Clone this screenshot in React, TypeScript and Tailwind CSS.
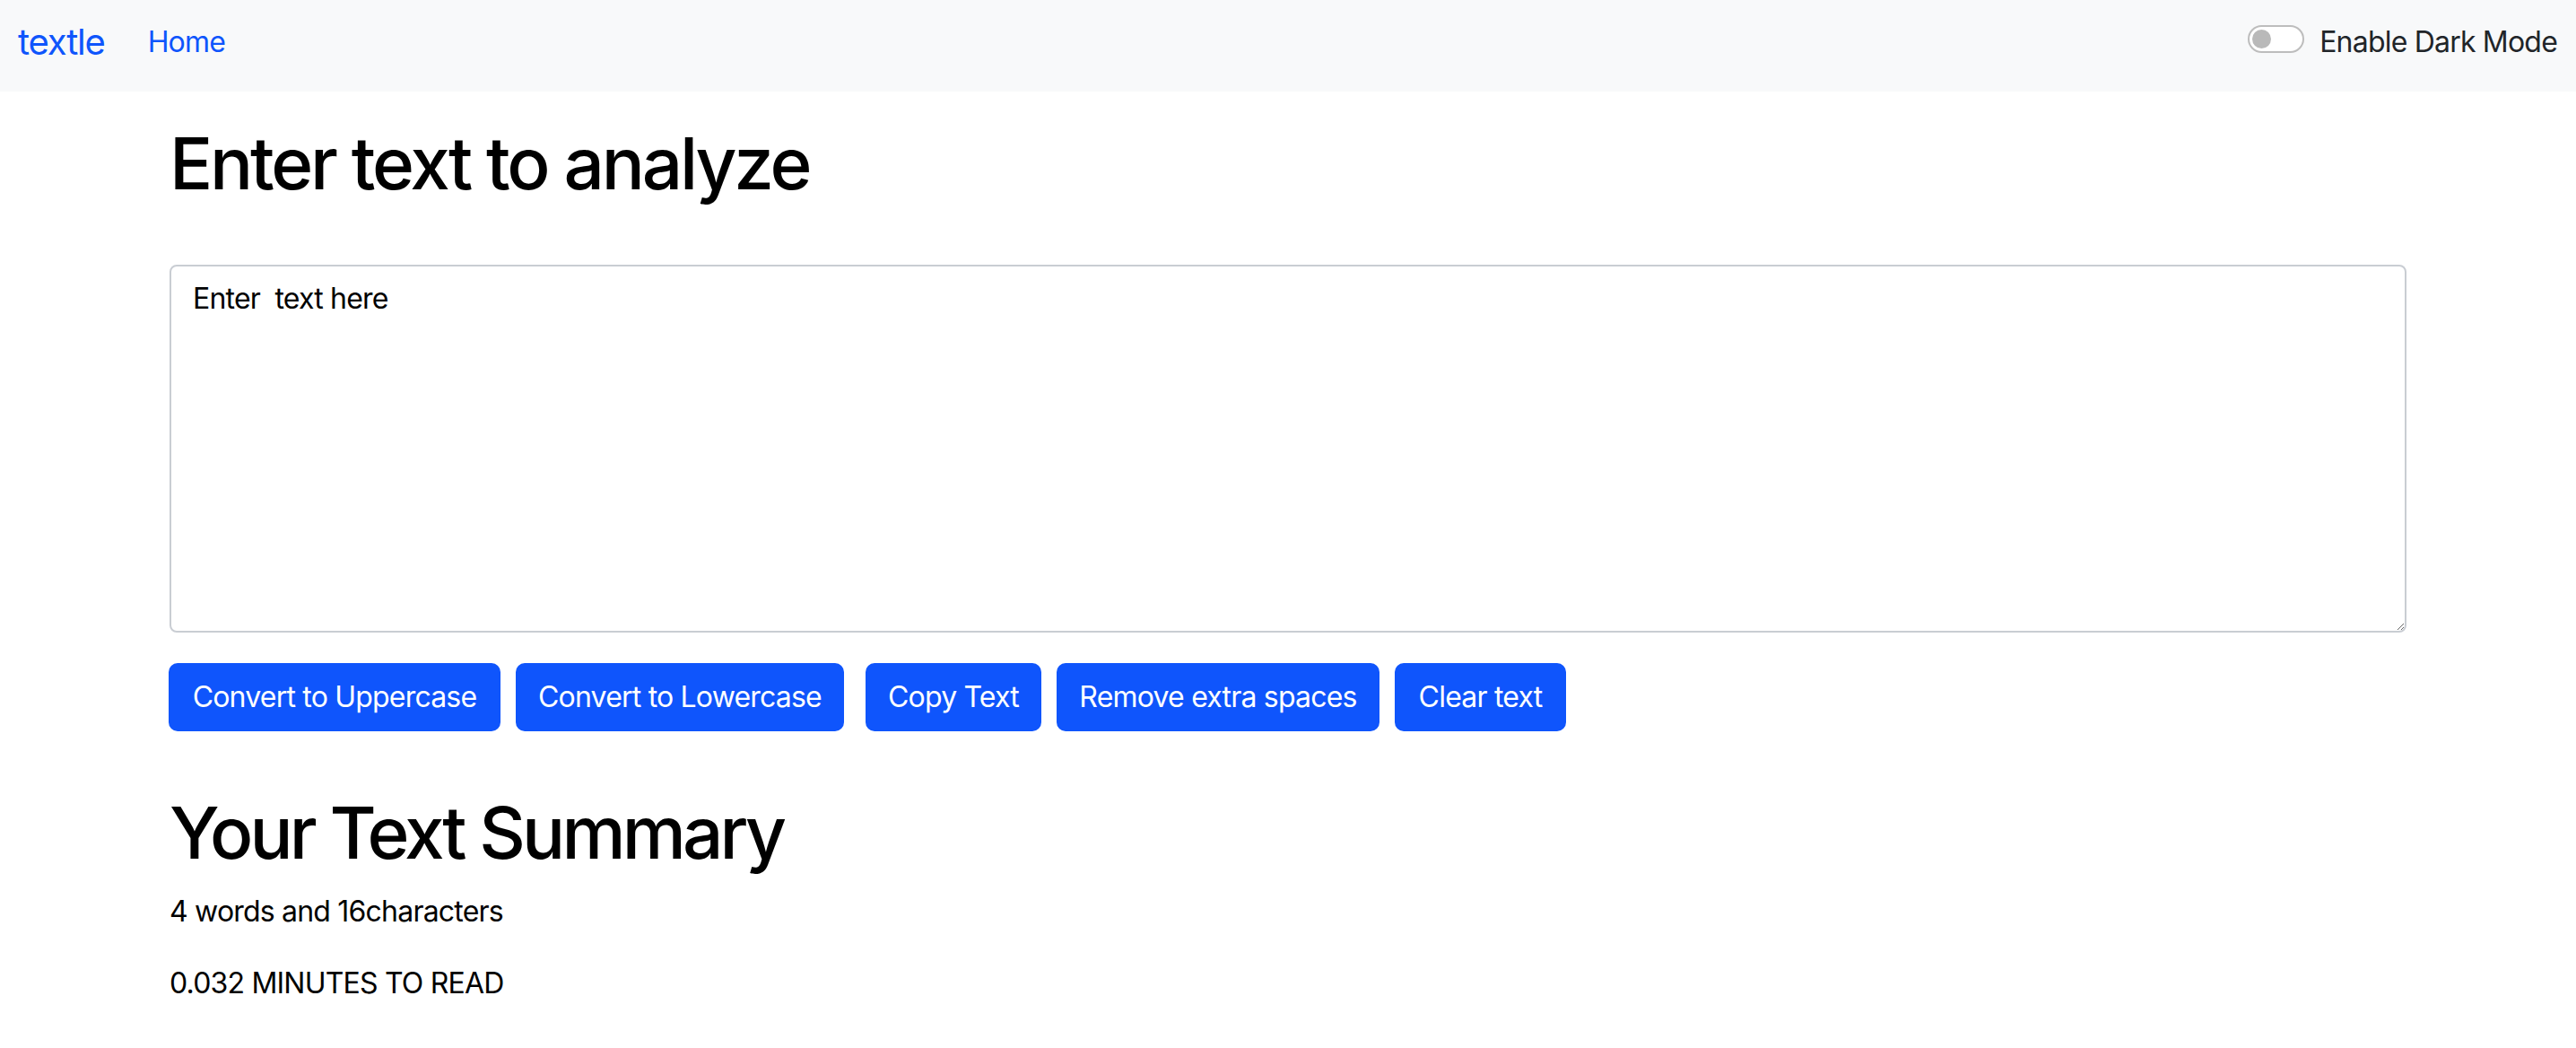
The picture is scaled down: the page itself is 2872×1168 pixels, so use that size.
import { useState } from "react";

const buttons = [
  { label: "Convert to Uppercase", className: "w-[370px]" },
  { label: "Convert to Lowercase", className: "w-[366px] ml-[17px]" },
  { label: "Copy Text", className: "w-[196px] ml-[24px]" },
  { label: "Remove extra spaces", className: "w-[360px] ml-[17px]" },
  { label: "Clear text", className: "w-[191px] ml-[17px]" },
];

function Navbar() {
  const [dark, setDark] = useState(false);

  return (
    <nav className="flex h-[102px] items-center bg-[#f8f9fa] pb-[8px] pl-[20px] pr-[21px]">
      <a href="#" className="text-[40px] leading-[60px] tracking-[-1.2px] text-[#0f55fc]">
        textle
      </a>
      <a href="#" className="ml-[48px] text-[32px] leading-[48px] tracking-[-0.8px] text-[#0f55fc]">
        Home
      </a>
      <label className="ml-auto flex items-center text-[32px] leading-[48px] tracking-[-0.8px] text-[#212529]">
        <button
          type="button"
          onClick={() => setDark(!dark)}
          className="mb-[7px] flex h-[31px] w-[63px] items-center rounded-full border-2 border-[#bdbdbd] bg-white"
        >
          <span className="ml-[3px] h-[21px] w-[21px] rounded-full bg-[#b9b9b9]" />
        </button>
        <span className="ml-[17px]">Enable Dark Mode</span>
      </label>
    </nav>
  );
}

export default function App() {
  const [text, setText] = useState("Enter  text here");
  // counts the way the original app does: split on single spaces
  const words = text.length ? text.split(" ").length : 0;

  return (
    <div className="min-h-screen bg-white font-['Inter','Liberation_Sans',sans-serif] text-black">
      <Navbar />

      <div className="px-[189px]">
        <h1 className="mt-[32px] mb-[65px] text-[80px] font-medium leading-[96px] tracking-[-3.2px]">
          Enter text to analyze
        </h1>
        <textarea
          value={text}
          onChange={(event) => setText(event.target.value)}
          className="block h-[410px] w-full rounded-[8px] border-2 border-[#c9cdd3] px-[24px] py-[12px] text-[32px] leading-[48px] tracking-[-0.8px] outline-none"
        />
        <div className="mt-[34px] flex -ml-px">
          {buttons.map((b) => (
            <button
              key={b.label}
              type="button"
              className={`${b.className} h-[76px] rounded-[10px] bg-[#0f55fc] text-[32px] leading-[48px] tracking-[-0.8px] text-white`}
            >
              {b.label}
            </button>
          ))}
        </div>

        <h1 className="mt-[65px] mb-[16px] text-[80px] font-medium leading-[96px] tracking-[-3.8px]">
          Your Text Summary
        </h1>
        <p className="mb-[32px] text-[32px] leading-[48px] tracking-[-0.8px]">
          {words} words and {text.length}characters
        </p>
        <p className="text-[32px] leading-[48px] tracking-[-0.8px]">
          {(0.008 * words).toFixed(3)} MINUTES TO READ
        </p>
      </div>
    </div>
  );
}
